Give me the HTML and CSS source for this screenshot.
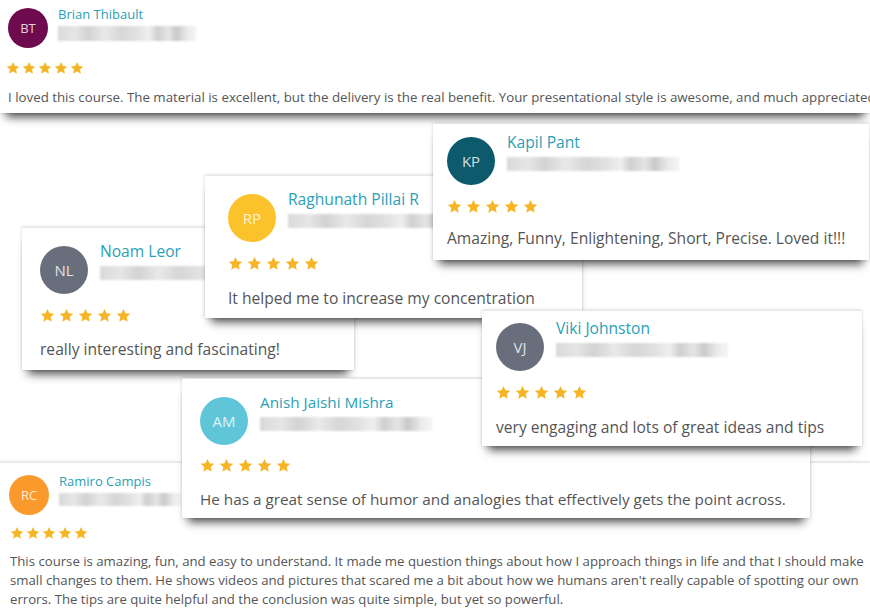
FILE: index.html
```html
<!DOCTYPE html>
<html lang="en">
<head>
    <meta charset="UTF-8">
    <meta name="viewport" content="width=device-width, initial-scale=1.0">
    <title>Reviews</title>
    <link rel="stylesheet" href="styles.css">
</head>
<body>
    <svg class="defs" width="0" height="0">
        <symbol id="star" viewBox="0 0 24 24">
            <path d="M12 1.5l3.2 7 7.6.8-5.7 5.1 1.6 7.5L12 18l-6.7 3.9 1.6-7.5L1.2 9.3l7.6-.8z"/>
        </symbol>
    </svg>
    <main class="wall">
        <!-- small cards, full width -->
        <div class="review small top-card">
            <div class="head">
                <div class="avatar bt">BT</div>
                <div class="who">
                    <div class="name">Brian Thibault</div>
                    <div class="blur"></div>
                </div>
            </div>
            <div class="stars">
                <svg><use href="#star"/></svg><svg><use href="#star"/></svg><svg><use href="#star"/></svg><svg><use href="#star"/></svg><svg><use href="#star"/></svg>
            </div>
            <p class="text nowrap">I loved this course. The material is excellent, but the delivery is the real benefit. Your presentational style is awesome, and much appreciated.</p>
        </div>

        <div class="review small bottom-card">
            <div class="head">
                <div class="avatar rc">RC</div>
                <div class="who">
                    <div class="name">Ramiro Campis</div>
                    <div class="blur"></div>
                </div>
            </div>
            <div class="stars">
                <svg><use href="#star"/></svg><svg><use href="#star"/></svg><svg><use href="#star"/></svg><svg><use href="#star"/></svg><svg><use href="#star"/></svg>
            </div>
            <p class="text nowrap">This course is amazing, fun, and easy to understand. It made me question things about how I approach things in life and that I should make<br>small changes to them. He shows videos and pictures that scared me a bit about how we humans aren't really capable of spotting our own<br>errors. The tips are quite helpful and the conclusion was quite simple, but yet so powerful.</p>
        </div>

        <!-- big cards, scattered -->
        <div class="review big card-nl">
            <div class="head">
                <div class="avatar nl">NL</div>
                <div class="who">
                    <div class="name">Noam Leor</div>
                    <div class="blur"></div>
                </div>
            </div>
            <div class="stars">
                <svg><use href="#star"/></svg><svg><use href="#star"/></svg><svg><use href="#star"/></svg><svg><use href="#star"/></svg><svg><use href="#star"/></svg>
            </div>
            <p class="text">really interesting and fascinating!</p>
        </div>

        <div class="review big card-rp">
            <div class="head">
                <div class="avatar rp">RP</div>
                <div class="who">
                    <div class="name">Raghunath Pillai R</div>
                    <div class="blur"></div>
                </div>
            </div>
            <div class="stars">
                <svg><use href="#star"/></svg><svg><use href="#star"/></svg><svg><use href="#star"/></svg><svg><use href="#star"/></svg><svg><use href="#star"/></svg>
            </div>
            <p class="text">It helped me to increase my concentration</p>
        </div>

        <div class="review big card-kp">
            <div class="head">
                <div class="avatar kp">KP</div>
                <div class="who">
                    <div class="name">Kapil Pant</div>
                    <div class="blur"></div>
                </div>
            </div>
            <div class="stars">
                <svg><use href="#star"/></svg><svg><use href="#star"/></svg><svg><use href="#star"/></svg><svg><use href="#star"/></svg><svg><use href="#star"/></svg>
            </div>
            <p class="text">Amazing, Funny, Enlightening, Short, Precise. Loved it!!!</p>
        </div>

        <div class="review big card-am">
            <div class="head">
                <div class="avatar am">AM</div>
                <div class="who">
                    <div class="name">Anish Jaishi Mishra</div>
                    <div class="blur"></div>
                </div>
            </div>
            <div class="stars">
                <svg><use href="#star"/></svg><svg><use href="#star"/></svg><svg><use href="#star"/></svg><svg><use href="#star"/></svg><svg><use href="#star"/></svg>
            </div>
            <p class="text nowrap">He has a great sense of humor and analogies that effectively gets the point across.</p>
        </div>

        <div class="review big card-vj">
            <div class="head">
                <div class="avatar vj">VJ</div>
                <div class="who">
                    <div class="name">Viki Johnston</div>
                    <div class="blur"></div>
                </div>
            </div>
            <div class="stars">
                <svg><use href="#star"/></svg><svg><use href="#star"/></svg><svg><use href="#star"/></svg><svg><use href="#star"/></svg><svg><use href="#star"/></svg>
            </div>
            <p class="text">very engaging and lots of great ideas and tips</p>
        </div>
    </main>
</body>
</html>
```

FILE: styles.css
```css
* {
    box-sizing: border-box;
}
body {
    margin: 0;
    padding: 0;
    background: #fff;
    font-family: "Open Sans", "Noto Sans", sans-serif;
    color: #555;
    overflow: hidden;
}
.defs {
    position: absolute;
}
.wall {
    position: relative;
    width: 870px;
    height: 612px;
    overflow: hidden;
}

/* card */
.review {
    position: absolute;
    background: #fff;
    border-top: 1px solid #e6e6e6;
    box-shadow: 0 10px 9px -6px rgba(0, 0, 0, 0.7), 0 0 3px rgba(0, 0, 0, 0.18);
    overflow: hidden;
}
.head {
    display: flex;
    align-items: flex-start;
}
.avatar {
    flex: none;
    border-radius: 50%;
    color: rgba(255, 255, 255, 0.82);
    display: flex;
    justify-content: center;
    align-items: center;
}
.name {
    color: #2b9fb6;
}
.blur {
    background: linear-gradient(90deg, #d9d9d9 0, #e6e6e6 12%, #d2d2d2 22%, #e9e9e9 34%, #d6d6d6 46%, #e2e2e2 58%, #efefef 66%, #cfcfcf 72%, #e5e5e5 80%, #c9c9c9 86%, #ececec 94%, #f4f4f4 100%);
    filter: blur(1px);
}
.stars {
    display: flex;
    color: #f6b526;
}
.text {
    margin: 0;
}
.nowrap {
    white-space: nowrap;
}

/* big cards */
.big {
    padding: 13px 14px 0;
}
.big .avatar {
    width: 48px;
    height: 48px;
    font-size: 15px;
}
.big .who {
    margin-left: 12px;
    margin-top: -4px;
}
.big .name {
    font-size: 15.6px;
    line-height: 18px;
}
.big .blur {
    width: 172px;
    height: 14px;
    margin-top: 6px;
}
.big .stars {
    margin-top: 14px;
    gap: 4px;
}
.big .stars svg {
    width: 15px;
    height: 15px;
    fill: currentColor;
}
.big .text {
    margin-top: 16px;
    font-size: 15.6px;
    line-height: 20px;
}

.card-kp {
    left: 433px;
    top: 123px;
    width: 436px;
    height: 137px;
    z-index: 4;
}
.card-kp .text {
    margin-top: 14px;
}
.card-rp {
    left: 205px;
    top: 175px;
    width: 377px;
    height: 143px;
    padding: 18px 23px 0;
    z-index: 3;
}
.card-rp .text {
    margin-top: 17px;
}
.card-nl {
    left: 22px;
    top: 227px;
    width: 332px;
    height: 143px;
    padding: 18px 18px 0;
    z-index: 2;
}
.card-vj {
    left: 482px;
    top: 310px;
    width: 380px;
    height: 136px;
    padding-top: 12px;
    z-index: 5;
}
.card-vj .text {
    margin-top: 17px;
}
.card-am {
    left: 182px;
    top: 378px;
    width: 628px;
    height: 140px;
    padding: 18px 18px 0;
    z-index: 4;
}
.card-am .name,
.card-am .text {
    font-size: 15.3px;
}
.card-am .stars {
    margin-top: 13px;
}

/* small cards */
.small {
    left: 0;
    width: 870px;
    z-index: 1;
}
.small .avatar {
    width: 40px;
    height: 40px;
    font-size: 13px;
}
.small .name {
    font-size: 13px;
    line-height: 16px;
}
.small .who {
    margin-left: 10px;
    margin-top: -2px;
}
.small .blur {
    height: 15px;
    margin-top: 4px;
}
.small .stars {
    gap: 2px;
    margin-left: -2px;
}
.small .stars svg {
    width: 14px;
    height: 14px;
    fill: currentColor;
}
.small .text {
    font-size: 13.3px;
    line-height: 19px;
}
.bt {
    background: #6e0b4e;
}
.kp {
    background: #0d5a6d;
}
.rp {
    background: #fbc22c;
}
.nl, .vj {
    background: #686e7b;
}
.am {
    background: #5ec6d8;
}
.rc {
    background: #fa9a2c;
}

.top-card {
    top: -2px;
    height: 115px;
    padding: 9px 0 0 8px;
}
.top-card .blur {
    width: 138px;
}
.top-card .stars {
    margin-top: 13px;
}
.top-card .text {
    margin-top: 13px;
}
.bottom-card {
    top: 462px;
    height: 160px;
    padding: 12px 0 0 9px;
}
.bottom-card .blur {
    width: 122px;
    height: 13px;
}
.bottom-card .stars {
    margin-top: 11px;
    margin-left: 1px;
}
.bottom-card .text {
    margin-top: 12px;
    margin-left: 1px;
    font-size: 13.2px;
}
```
